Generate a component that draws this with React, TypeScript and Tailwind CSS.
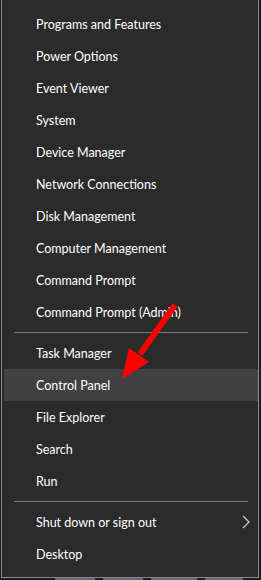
import React from 'react'

const groupA = [
  'Programs and Features',
  'Power Options',
  'Event Viewer',
  'System',
  'Device Manager',
  'Network Connections',
  'Disk Management',
  'Computer Management',
  'Command Prompt',
  'Command Prompt (Admin)',
]
const groupB = ['Task Manager', 'Control Panel', 'File Explorer', 'Search', 'Run']

function Item({ label, active, sub }: { label: string; active?: boolean; sub?: boolean }) {
  return (
    <div
      className={`flex h-[32px] items-center justify-between pl-[32px] pr-[8px] text-[12.5px] text-white ${
        active ? 'bg-[#414141]' : ''
      }`}
    >
      <span className="pt-[2px]">{label}</span>
      {sub && (
        <svg width="8" height="14" viewBox="0 0 8 14" className="text-[#cfcfcf]">
          <path d="M1 1 L7 7 L1 13" fill="none" stroke="currentColor" strokeWidth="1.2" />
        </svg>
      )}
    </div>
  )
}

function Sep() {
  return <div className="mx-[10px] my-[4px] h-px bg-[#7a7a7a]" />
}

export default function App() {
  return (
    <div
      className="relative h-[580px] w-[261px] overflow-hidden bg-[#1c1c1c]"
      style={{ fontFamily: 'Lato, "Noto Sans", sans-serif' }}
    >
      {/* 메뉴 패널 */}
      <div className="ml-[1px] h-[578px] w-[258px] border-x border-b border-[#8a8a8a] bg-[#2b2b2b] pl-[2px] pt-[8px]">
        {groupA.map((l) => (
          <Item key={l} label={l} />
        ))}
        <Sep />
        {groupB.map((l) => (
          <Item key={l} label={l} active={l === 'Control Panel'} />
        ))}
        <Sep />
        <Item label="Shut down or sign out" sub />
        <Item label="Desktop" />
      </div>

      {/* 작업표시줄 조각 */}
      <div className="flex h-[2px] gap-[8px] pl-[55px]">
        <div className="w-[40px] bg-[#5a6a78]" />
        <div className="w-[40px] bg-[#5a6a78]" />
        <div className="w-[46px] bg-[#5a6a78]" />
        <div className="w-[38px] bg-[#5a6a78]" />
      </div>

      {/* 빨간 화살표 */}
      <svg className="pointer-events-none absolute left-0 top-0" width="261" height="580">
        <line x1="175" y1="305" x2="140" y2="354" stroke="#ff0000" strokeWidth="6" strokeLinecap="butt" />
        <path d="M122 379 L129 348 L139 355 L149 362 Z" fill="#ff0000" />
      </svg>
    </div>
  )
}
